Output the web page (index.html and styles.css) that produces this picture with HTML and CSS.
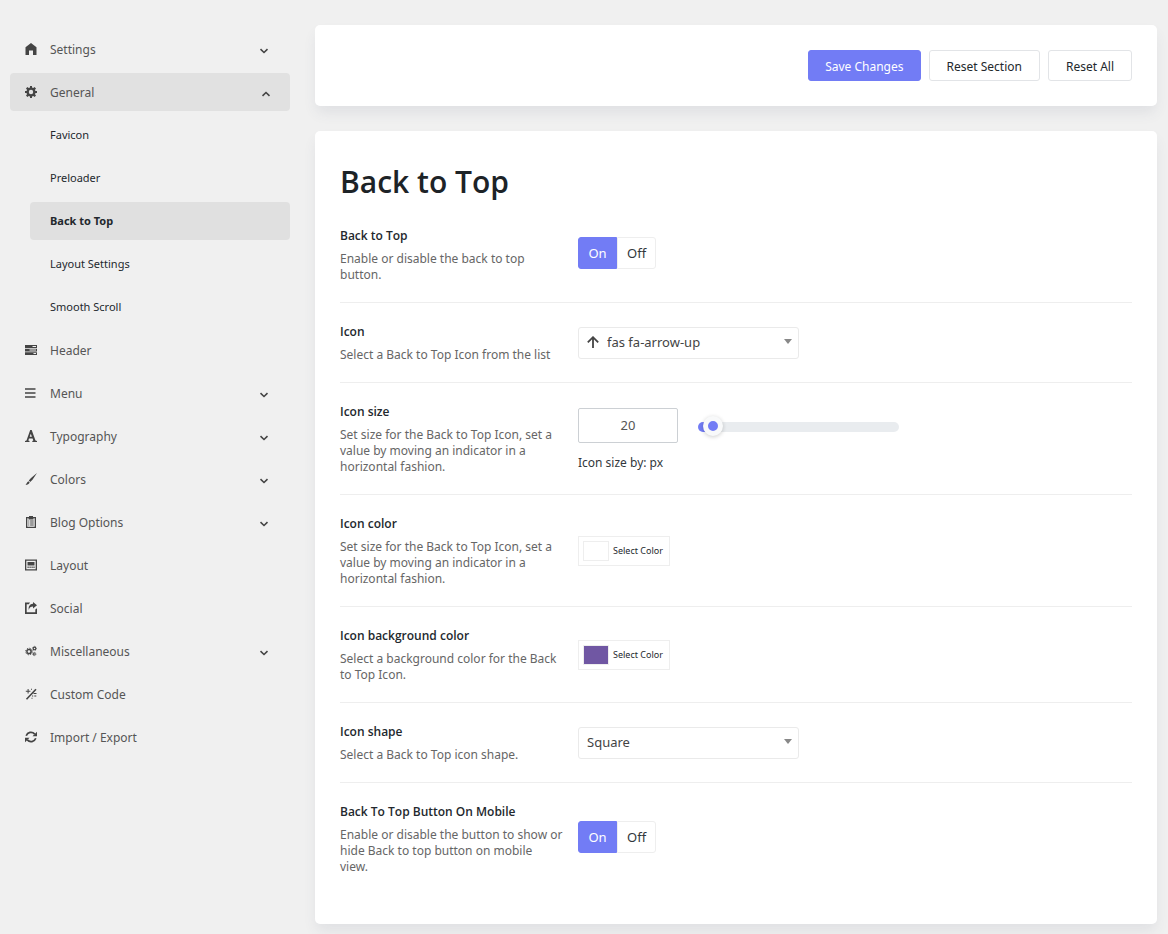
FILE: index.html
```html
<!DOCTYPE html>
<html lang="en">
<head>
<meta charset="utf-8">
<title>Back to Top – Theme Options</title>
<link rel="stylesheet" href="styles.css">
</head>
<body>
<svg class="sprite" aria-hidden="true">
  <symbol id="down" viewBox="0 0 10 10"><path d="M1.500 3.200 5 6.500l3.500-3.300" fill="none" stroke="currentColor" stroke-width="1.600"/></symbol>
  <symbol id="up" viewBox="0 0 10 10"><path d="M1.500 6.800 5 3.500l3.500 3.300" fill="none" stroke="currentColor" stroke-width="1.600"/></symbol>
  <symbol id="caret" viewBox="0 0 8 5"><path d="M0 0h8L4 5z" fill="currentColor"/></symbol>
</svg>
<div class="layout">
  <nav class="sidebar" aria-label="Options">
    <ul class="menu">
      <li><a class="item" href="#"><svg class="icon" viewBox="0 0 12 12"><path d="M6 0 .5 4.200V12H4V7.500h4V12h3.500V4.200z"/></svg><span class="name">Settings</span><svg class="chevron"><use href="#down"/></svg></a></li>
      <li>
        <a class="item open" href="#"><svg class="icon" viewBox="0 0 12 12"><path fill-rule="evenodd" d="M5 0h2v1.500l1.300.5 1.200-1.100 1.500 1.500L10 3.700l.4 1.300H12v2h-1.500L10 8.300l1 1.300L9.600 11l-1.300-1-1.300.5V12H5v-1.500L3.700 10l-1.300 1L1 9.600l1-1.300L1.500 7H0V5h1.600L2 3.700 1 2.400 2.400 1l1.300 1L5 1.500zM6 3.800a2.200 2.200 0 1 0 0 4.400 2.200 2.200 0 0 0 0-4.400z"/></svg><span class="name">General</span><svg class="chevron"><use href="#up"/></svg></a>
        <ul class="menu submenu">
          <li><a class="item sub" href="#">Favicon</a></li>
          <li><a class="item sub" href="#">Preloader</a></li>
          <li><a class="item sub current" href="#" aria-current="page">Back to Top</a></li>
          <li><a class="item sub" href="#">Layout Settings</a></li>
          <li><a class="item sub" href="#">Smooth Scroll</a></li>
        </ul>
      </li>
      <li><a class="item" href="#"><svg class="icon" viewBox="0 0 12 12"><path fill-rule="evenodd" d="M0 1h12v3H0zm7.500 1v1H11V2zM0 4.700h12v2.900H0zM4.500 5.500v1H11v-1zM0 8.200h12V11H0zm8.500.9v1H11v-1z"/></svg><span class="name">Header</span></a></li>
      <li><a class="item" href="#"><svg class="icon" viewBox="0 0 12 12"><path d="M0 1.200h10.500v1.600H0zm0 4h10.500v1.600H0zm0 4h10.500v1.600H0z"/></svg><span class="name">Menu</span><svg class="chevron"><use href="#down"/></svg></a></li>
      <li><a class="item" href="#"><svg class="icon" viewBox="0 0 12 12"><path fill-rule="evenodd" d="M5.200 0h1.500l3.800 10.500 1.500.6v.9H7.300v-.9l1-.6-.7-2H4l-.7 2 1.200.6v.9H0v-.9l1.500-.6zM4.700 6.800h2.200L5.800 3.800z"/></svg><span class="name">Typography</span><svg class="chevron"><use href="#down"/></svg></a></li>
      <li><a class="item" href="#"><svg class="icon" viewBox="0 0 12 12"><path d="M12 0 7.500 6.700 5.200 9 3.800 7.600 6 5zM3.300 8.200l1.400 1.400C4 11.200 2.500 12 .5 12c1-.8 1.200-2.800 2.800-3.800z"/></svg><span class="name">Colors</span><svg class="chevron"><use href="#down"/></svg></a></li>
      <li><a class="item" href="#"><svg class="icon" viewBox="0 0 12 12"><path fill-rule="evenodd" d="M4 0h4v1h3v11H1V1h3zM2.300 2.300v8.500h7.400V2.300H8.500V3.500h-5V2.300z"/><path d="M3.300 4.500h1v1h-1zm1.800 0h3.600v1H5.100zM3.300 6.500h1v1h-1zm1.800 0h3.600v1H5.100zM3.300 8.500h1v1h-1zm1.800 0h3.600v1H5.100z"/></svg><span class="name">Blog Options</span><svg class="chevron"><use href="#down"/></svg></a></li>
      <li><a class="item" href="#"><svg class="icon" viewBox="0 0 12 12"><path fill-rule="evenodd" d="M0 .5h12v11H0zm1.300 1.300v8.400h9.400V1.800z"/><path d="M2.500 3h7v3.500h-7zm0 4.500h1.200V9H2.500zm2 0h1.200V9H4.500zm2 0h1.200V9H6.500zm1.900 0h1.200V9H8.400z"/></svg><span class="name">Layout</span></a></li>
      <li><a class="item" href="#"><svg class="icon" viewBox="0 0 12 12"><path d="M0 .5h5L3.800 2.200H1.700v8.100h8.600V7.500L12 6.300V12H0zM8 0l4 3.200-4 3.300V4.600C5.700 4.600 4.500 5.500 3.800 8c-.6-3.300.8-6 4.200-6.200z"/></svg><span class="name">Social</span></a></li>
      <li><a class="item" href="#"><svg class="icon" viewBox="0 0 12 12"><g fill="none" stroke="currentColor"><circle cx="4" cy="6.500" r="2.100" stroke-width="1.500"/><circle cx="4" cy="6.500" r="3.300" stroke-width="1" stroke-dasharray="1.300 1.290"/><circle cx="9.500" cy="3.400" r="1.300" stroke-width="1.100"/><circle cx="9.500" cy="3.400" r="2.100" stroke-width=".7" stroke-dasharray=".8 .85"/><circle cx="9.300" cy="9" r="1" stroke-width="1"/><circle cx="9.300" cy="9" r="1.700" stroke-width=".7" stroke-dasharray=".7 .630"/></g></svg><span class="name">Miscellaneous</span><svg class="chevron"><use href="#down"/></svg></a></li>
      <li><a class="item" href="#"><svg class="icon" viewBox="0 0 12 12"><path d="M1.500 11.200 11 1.200" fill="none" stroke="currentColor" stroke-width="1.600"/><path d="M2.600 1h1v1.700h1.800v1H3.600v1.700h-1V3.700H.8v-1h1.800zM6 .8h1v1H6zM8.500 5h3v.9h-3zM7 7.500h1.200v1H7zM9.300 7.500h2v1h-2zM6.500 9.800h1v1h-1z"/></svg><span class="name">Custom Code</span></a></li>
      <li><a class="item" href="#"><svg class="icon" viewBox="0 0 12 12"><path d="M1.200 4.700a5 5 0 0 1 8.500-1.600M10.800 7.300a5 5 0 0 1-8.500 1.600" fill="none" stroke="currentColor" stroke-width="1.700"/><path d="M12 .7v4.500H7.500zM0 11.300V6.800h4.500z"/></svg><span class="name">Import / Export</span></a></li>
    </ul>
  </nav>

  <main class="content">
    <div class="card actions">
      <button class="btn primary" type="button">Save Changes</button>
      <button class="btn" type="button">Reset Section</button>
      <button class="btn" type="button">Reset All</button>
    </div>
    <form class="card panel">
      <h1 class="heading">Back to Top</h1>

      <div class="row">
        <div class="info"><h2 class="title">Back to Top</h2><p class="desc">Enable or disable the back to top button.</p></div>
        <div class="switch" role="radiogroup" aria-label="Back to Top">
          <input type="radio" name="enable" id="enable-on" checked><label for="enable-on">On</label>
          <input type="radio" name="enable" id="enable-off"><label for="enable-off">Off</label>
        </div>
      </div>

      <div class="row">
        <div class="info"><label class="title" for="icon">Icon</label><p class="desc">Select a Back to Top Icon from the list</p></div>
        <div class="picker with-icon">
          <svg class="arrow" viewBox="0 0 12 12"><path d="M6 12V1.200M.8 6.300 6 1.200l5.200 5.100" fill="none" stroke="currentColor" stroke-width="1.800"/></svg>
          <select id="icon"><option>fas fa-arrow-up</option></select>
          <svg class="caret"><use href="#caret"/></svg>
        </div>
      </div>

      <div class="row">
        <div class="info"><label class="title" for="size">Icon size</label><p class="desc">Set size for the Back to Top Icon, set a value by moving an indicator in a horizontal fashion.</p></div>
        <div class="sizing">
          <div class="size-line">
            <input class="number" id="size" type="text" inputmode="numeric" value="20">
            <input class="slider" type="range" min="15" max="200" value="20" aria-label="Icon size">
          </div>
          <p class="hint">Icon size by: px</p>
        </div>
      </div>

      <div class="row">
        <div class="info"><h2 class="title">Icon color</h2><p class="desc">Set size for the Back to Top Icon, set a value by moving an indicator in a horizontal fashion.</p></div>
        <button class="color" type="button"><span class="swatch white"></span>Select Color</button>
      </div>

      <div class="row">
        <div class="info"><h2 class="title">Icon background color</h2><p class="desc">Select a background color for the Back to Top Icon.</p></div>
        <button class="color" type="button"><span class="swatch purple"></span>Select Color</button>
      </div>

      <div class="row">
        <div class="info"><label class="title" for="shape">Icon shape</label><p class="desc">Select a Back to Top icon shape.</p></div>
        <div class="picker">
          <select id="shape"><option>Square</option></select>
          <svg class="caret"><use href="#caret"/></svg>
        </div>
      </div>

      <div class="row">
        <div class="info"><h2 class="title">Back To Top Button On Mobile</h2><p class="desc">Enable or disable the button to show or hide Back to top button on mobile<br>view.</p></div>
        <div class="switch" role="radiogroup" aria-label="Back To Top Button On Mobile">
          <input type="radio" name="mobile" id="mobile-on" checked><label for="mobile-on">On</label>
          <input type="radio" name="mobile" id="mobile-off"><label for="mobile-off">Off</label>
        </div>
      </div>
    </form>
  </main>
</div>
</body>
</html>
```

FILE: styles.css
```css
* { box-sizing: border-box; }

body {
  margin: 0;
  background: #f0f0f0;
  color: #32373c;
  font-family: "Noto Sans", "Open Sans", sans-serif;
  font-size: 12px;
  line-height: 16px;
}

button, input, select { font: inherit; color: inherit; margin: 0; }
h1, h2, p { margin: 0; }
.sprite { display: none; }

.layout {
  display: grid;
  grid-template-columns: 280px minmax(0, 1fr);
  gap: 25px;
  padding: 25px 11px 10px 10px;
}

/* Sidebar */
.menu {
  list-style: none;
  margin: 0;
  padding: 0;
  display: flex;
  flex-direction: column;
  gap: 5px;
}
.sidebar { padding-top: 5px; }
.submenu { padding: 5px 0 0 20px; }
.item {
  display: flex;
  align-items: center;
  gap: 13px;
  height: 38px;
  padding: 0 21px 0 15px;
  border-radius: 4px;
  color: #555;
  font-size: 12px;
  text-decoration: none;
}
.item.open { background: #e1e1e1; padding-right: 19px; }
.item.sub { padding-left: 20px; color: #23282d; font-size: 11px; }
.item.current { background: #e0e0e0; font-weight: 700; }
.name { padding-top: 2px; }
.icon { width: 12px; height: 12px; fill: currentColor; color: #444; }
.chevron { width: 10px; height: 10px; margin: 3px 0 0 auto; color: #444; }

/* Cards */
.content { display: flex; flex-direction: column; gap: 25px; }
.card {
  padding: 25px;
  border-radius: 5px;
  background: #fff;
  box-shadow: 0 8px 14px -2px rgba(70, 80, 110, .1);
}
.card.panel { padding-bottom: 30px; }
.actions { display: flex; justify-content: flex-end; gap: 8px; }
.btn {
  height: 31px;
  padding: 2px 17px 0;
  border: 1px solid #e2e4e7;
  border-radius: 3px;
  background: #fff;
  color: #23282d;
  font-size: 12px;
}
.btn.primary { padding: 2px 16px 0; border-color: #727cf5; background: #727cf5; color: #fff; }
.heading {
  color: #1d2327;
  font-family: "Open Sans", "Noto Sans", sans-serif;
  font-size: 30px;
  font-weight: 600;
  line-height: 51px;
}

/* Option rows */
.row {
  display: grid;
  grid-template-columns: 238px minmax(0, 1fr);
  align-items: center;
  justify-items: start;
  padding: 20px 0 19px;
  border-top: 1px solid #eee;
}
.heading + .row { border-top: 0; }
.info { padding-right: 10px; align-self: start; }
.title {
  display: block;
  margin-bottom: 6px;
  color: #23282d;
  font-family: "Open Sans", "Noto Sans", sans-serif;
  font-size: 12px;
  font-weight: 600;
  line-height: 18px;
}
.desc { color: #666; }

/* On / off switch */
.switch { display: flex; position: relative; margin-bottom: 4px; }
.switch input { position: absolute; opacity: 0; }
.switch label {
  min-width: 39px;
  padding: 7px 9px;
  border: 1px solid #eee;
  border-radius: 0 3px 3px 0;
  font-size: 13px;
  text-align: center;
}
.switch input:first-child + label { border-radius: 3px 0 0 3px; }
.switch input:checked + label { border-color: #727cf5; background: #727cf5; color: #fff; }

/* Drop-downs */
.picker { position: relative; width: 221px; }
.picker select {
  display: block;
  width: 100%;
  height: 32px;
  padding: 0 24px 2px 8px;
  border: 1px solid #eaeaea;
  border-radius: 3px;
  background: #fff;
  color: #444;
  font-size: 13px;
  appearance: none;
}
.picker.with-icon select { padding-left: 28px; }
.arrow { position: absolute; left: 9px; top: 9px; width: 12px; height: 12px; color: #444; }
.caret { position: absolute; right: 7px; top: 12px; width: 8px; height: 5px; color: #888; pointer-events: none; }

/* Size field and slider */
.size-line { display: flex; align-items: center; gap: 20px; }
.number {
  width: 100px;
  height: 35px;
  border: 1px solid #ccd0d4;
  border-radius: 2px;
  background: #fff;
  color: #555;
  font-size: 13px;
  text-align: center;
}
.slider {
  width: 201px;
  height: 20px;
  margin-top: 4px;
  background: none;
  appearance: none;
}
.slider::-webkit-slider-runnable-track {
  height: 10px;
  border-radius: 5px;
  background: linear-gradient(to right, #727cf5 15px, #e9ecef 15px);
}
.slider::-webkit-slider-thumb {
  width: 20px;
  height: 20px;
  margin-top: -6px;
  border: 5px solid #f8f9fa;
  border-radius: 50%;
  background: #727cf5;
  box-shadow: 0 1px 4px rgba(0, 0, 0, .2);
  appearance: none;
}
.hint { margin-top: 12px; }

/* Color buttons */
.color {
  display: flex;
  align-items: center;
  gap: 4px;
  height: 30px;
  padding: 0 6px 0 4px;
  border: 1px solid #eee;
  background: #fff;
  color: #23282d;
  font-size: 9px;
}
.swatch { width: 26px; height: 20px; border: 1px solid #eee; }
.swatch.white { background: #fff; }
.swatch.purple { background: #7057a3; }
```
